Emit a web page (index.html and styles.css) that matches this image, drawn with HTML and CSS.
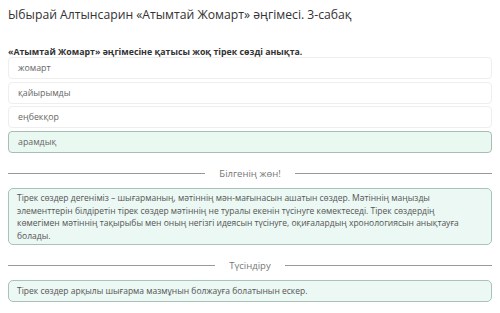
FILE: index.html
```html
<!DOCTYPE html>
<html lang="kk">
<head>
<meta charset="UTF-8" />
<title>Ыбырай Алтынсарин «Атымтай Жомарт» әңгімесі. 3-сабақ</title>
<meta name="viewport" content="width=device-width, initial-scale=1" />
<link rel="stylesheet" href="styles.css">
</head>
<body>

<h1 class="lesson-title">Ыбырай Алтынсарин «Атымтай Жомарт» әңгімесі. 3-сабақ</h1>

<p class="question">«Атымтай Жомарт» әңгімесіне қатысы жоқ тірек сөзді анықта.</p>

<ul class="answers">
  <li class="answer">жомарт</li>
  <li class="answer">қайырымды</li>
  <li class="answer">еңбекқор</li>
  <li class="answer correct">арамдық</li>
</ul>

<div class="divider"><span>Білгенің жөн!</span></div>

<div class="note">
  Тірек сөздер дегеніміз – шығарманың, мәтіннің мән-мағынасын ашатын сөздер. Мәтіннің маңызды<br>
  элементтерін білдіретін тірек сөздер мәтіннің не туралы екенін түсінуге көмектеседі. Тірек сөздердің<br>
  көмегімен мәтіннің тақырыбы мен оның негізгі идеясын түсінуге, оқиғалардың хронологиясын анықтауға<br>
  болады.
</div>

<div class="divider"><span>Түсіндіру</span></div>

<div class="note single">
  Тірек сөздер арқылы шығарма мазмұнын болжауға болатынын ескер.
</div>

</body>
</html>
```

FILE: styles.css
```css
body {
  font-family: "Open Sans", "Noto Sans", sans-serif;
  background-color: #fff;
  margin: 0;
  padding: 6px 8px;
  color: #555;
}
.lesson-title {
  font-size: 12.2px;
  font-weight: 400;
  color: #333;
  margin: 0;
  line-height: 18px;
}
.question {
  font-size: 8.8px;
  font-weight: 700;
  color: #333;
  margin: 23px 0 0 0;
  line-height: 10px;
}
/* варианттар */
.answers {
  list-style: none;
  padding: 0;
  margin: 0;
}
.answer {
  height: 20px;
  line-height: 20px;
  margin-bottom: 2.5px;
  padding: 0 9px;
  font-size: 8.8px;
  color: #666;
  border: 1px solid #eee;
  border-radius: 4px;
  background: #fff;
}
.answer.correct {
  background: #e9f8f1;
  border-color: #a9bdb6;
}
.divider {
  display: flex;
  align-items: center;
  gap: 14px;
  margin: 14px 0 8px 0;
  font-size: 9.5px;
  color: #777;
  line-height: 13px;
}
.divider::before, .divider::after {
  content: "";
  flex: 1;
  border-top: 1px solid #999;
}
.note {
  background: #ebf8f3;
  border: 1px solid #a9c2ba;
  border-radius: 5px;
  padding: 3.5px 8px 2px 8px;
  font-size: 8.5px;
  line-height: 12.5px;
  color: #555;
  white-space: nowrap;
}
.note.single {
  padding: 4px 8px 3px 8px;
}
```
